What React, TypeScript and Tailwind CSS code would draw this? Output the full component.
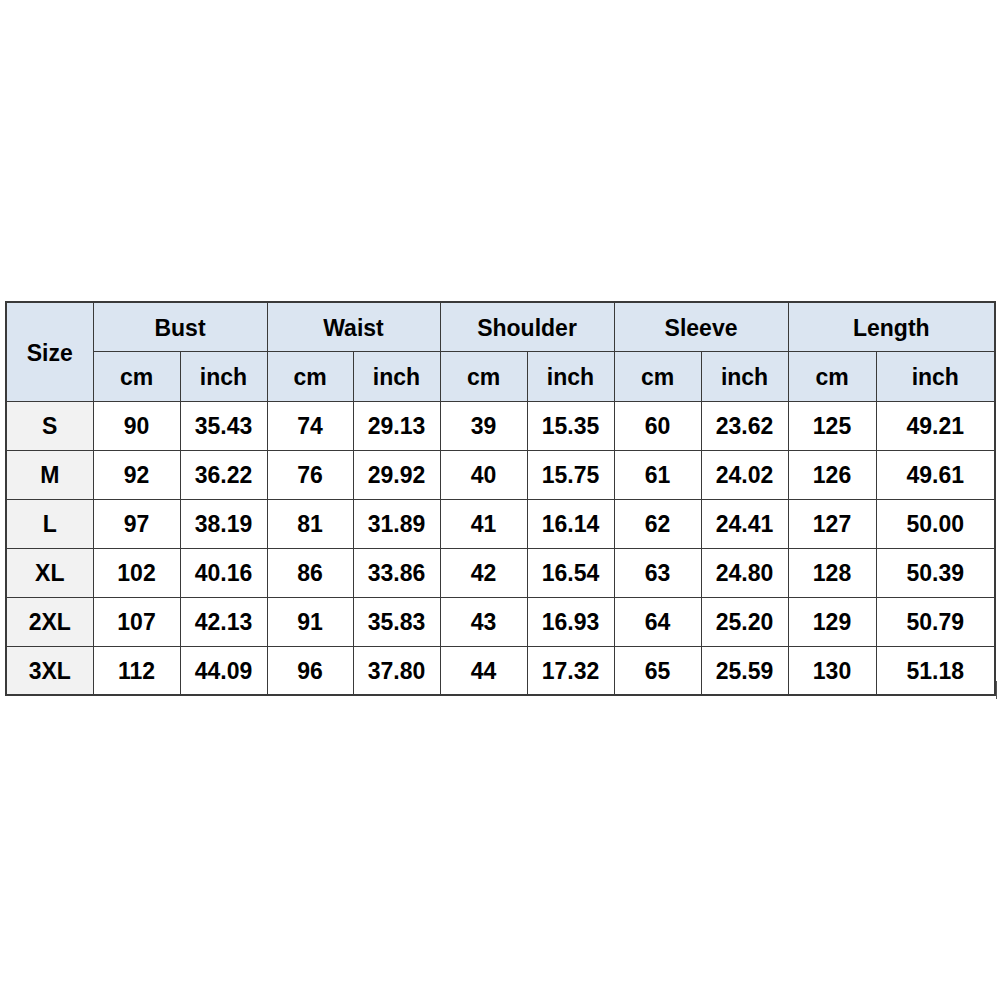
import React from 'react';

const groups = ['Bust', 'Waist', 'Shoulder', 'Sleeve', 'Length'];

const rows: [string, ...string[]][] = [
  ['S', '90', '35.43', '74', '29.13', '39', '15.35', '60', '23.62', '125', '49.21'],
  ['M', '92', '36.22', '76', '29.92', '40', '15.75', '61', '24.02', '126', '49.61'],
  ['L', '97', '38.19', '81', '31.89', '41', '16.14', '62', '24.41', '127', '50.00'],
  ['XL', '102', '40.16', '86', '33.86', '42', '16.54', '63', '24.80', '128', '50.39'],
  ['2XL', '107', '42.13', '91', '35.83', '43', '16.93', '64', '25.20', '129', '50.79'],
  ['3XL', '112', '44.09', '96', '37.80', '44', '17.32', '65', '25.59', '130', '51.18'],
];

const widths = [87, 87, 87, 86, 87, 87, 87, 87, 87, 88, 119];

const cell = 'border border-[#3a3a3a] text-center align-middle px-0 pt-[2px] pb-0';

export default function App() {
  return (
    <div
      className="min-h-[1000px] w-[1000px] bg-white pt-[301px] pl-[5px] text-[23px] font-bold text-black"
      style={{ fontFamily: '"Liberation Sans", Arial, sans-serif' }}
    >
      <div className="relative w-[990px]">
        <table className="table-fixed border-collapse border-2 border-[#3a3a3a] w-[990px]">
          <colgroup>
            {widths.map((w, i) => (
              <col key={i} style={{ width: w }} />
            ))}
          </colgroup>
          <thead>
            <tr className="h-[49px] bg-[#dbe5f1]">
              <th rowSpan={2} className={cell}>
                Size
              </th>
              {groups.map((g) => (
                <th key={g} colSpan={2} className={cell}>
                  {g}
                </th>
              ))}
            </tr>
            <tr className="h-[50px] bg-[#dbe5f1]">
              {groups.map((g) => (
                <React.Fragment key={g}>
                  <th className={cell}>cm</th>
                  <th className={cell}>inch</th>
                </React.Fragment>
              ))}
            </tr>
          </thead>
          <tbody>
            {rows.map((r) => (
              <tr key={r[0]} className="h-[49px]">
                {r.map((v, i) => (
                  <td key={i} className={`${cell} ${i === 0 ? 'bg-[#f2f2f2]' : 'bg-white'}`}>
                    {v}
                  </td>
                ))}
              </tr>
            ))}
          </tbody>
        </table>
        {/* stray tick at the bottom right corner */}
        <span className="absolute right-[-2px] bottom-[-3px] h-[18px] w-px bg-[#555]" />
      </div>
    </div>
  );
}
